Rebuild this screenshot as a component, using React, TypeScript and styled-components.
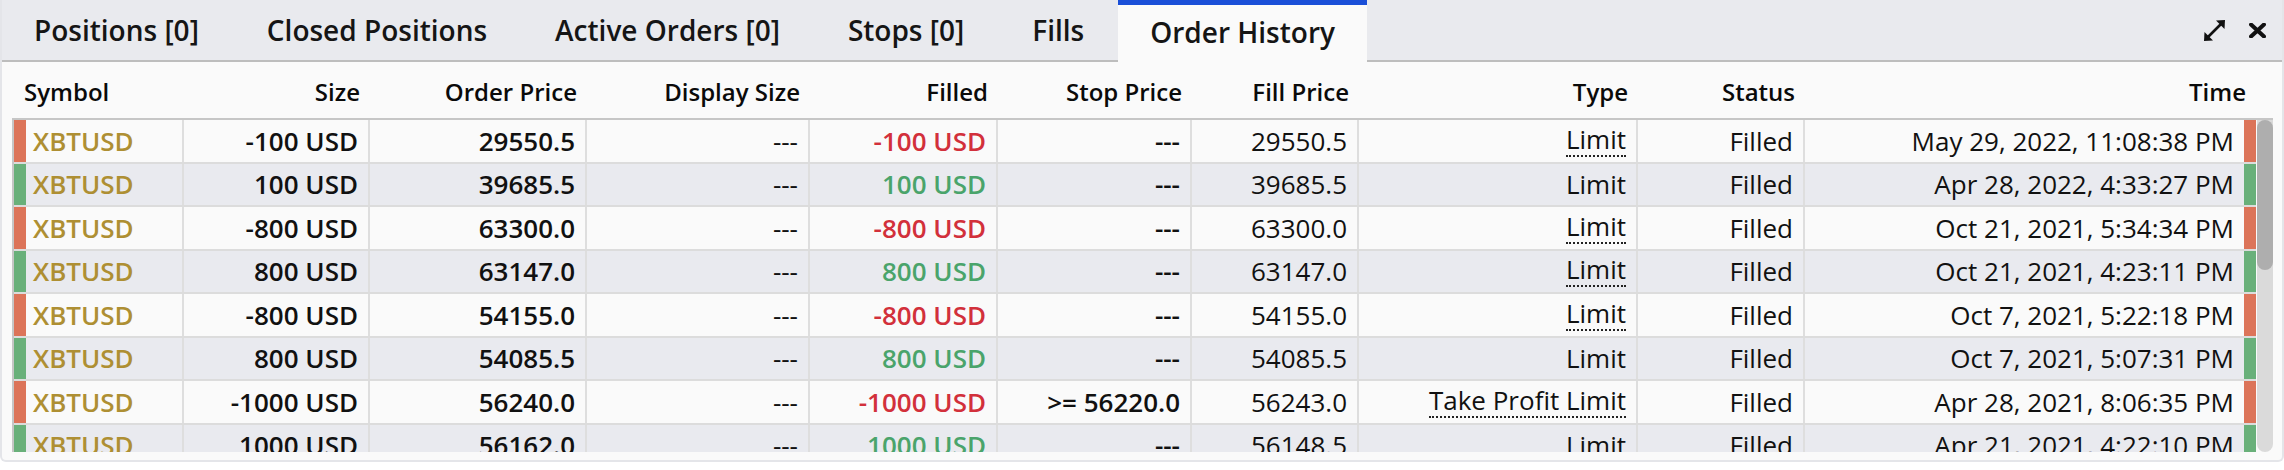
import React from "react";
import styled, { createGlobalStyle, css } from "styled-components";

const GlobalStyle = createGlobalStyle`
  html, body {
    margin: 0;
    padding: 0;
    background: #ffffff;
  }
  body {
    font-family: "Open Sans", "Noto Sans", sans-serif;
    color: #111111;
  }
`;

const HEAD_COLS = "170px 186px 217px 223px 188px 194px 167px 279px 167px 451px";
const ROW_COLS = "12px 158px 186px 217px 223px 188px 194px 167px 279px 167px 439px 12px";

const Panel = styled.div`
    height: 462px;
    box-sizing: border-box;
    display: flex;
    flex-direction: column;
    background: #fafafa;
    border: 2px solid #e4e5e9;
    border-top: none;
    border-radius: 0 0 6px 6px;
    overflow: hidden;
`

const TabBar = styled.div`
    height: 60px;
    display: flex;
    align-items: stretch;
    background: #e9eaee;
    border-bottom: 2px solid #bdbdbd;
    margin: 0 -2px;
`

const Tab = styled.div<{ $active?: boolean }>`
    display: flex;
    align-items: center;
    padding: 0 34px;
    font-size: 28px;
    font-weight: 600;
    color: #151515;
    white-space: nowrap;
    box-sizing: border-box;
    ${p => p.$active && css`
        background: #fafafa;
        border-top: 5px solid #1a4fd8;
        margin-bottom: -2px;
        padding: 0 32px 3px;
    `}
`

const Spacer = styled.div`
    flex: 1;
`

const WindowButtons = styled.div`
    display: flex;
    align-items: center;
    gap: 23px;
    padding-right: 18px;
`

const IconButton = styled.span`
    display: flex;
    color: #111;
`

const Content = styled.div`
    flex: 1;
    display: flex;
    flex-direction: column;
    padding: 0 9px 8px 10px;
    min-height: 0;
`

const HeaderRow = styled.div`
    display: grid;
    grid-template-columns: ${HEAD_COLS};
    height: 56px;
    padding-left: 2px;
    border-bottom: 2px solid #c6c6c6;
    font-size: 24px;
    font-weight: 600;
    color: #0a0a0a;
`

const HeadCell = styled.div<{ $left?: boolean }>`
    display: flex;
    align-items: center;
    justify-content: ${p => (p.$left ? "flex-start" : "flex-end")};
    padding: 2px 10px 0;
    white-space: nowrap;
`

const Body = styled.div`
    flex: 1;
    display: flex;
    border-left: 2px solid #c6c6c6;
    min-height: 0;
`

const Rows = styled.div`
    flex: 1;
    overflow: hidden;
`

const Row = styled.div<{ $even: boolean }>`
    display: grid;
    grid-template-columns: ${ROW_COLS};
    height: 41.5px;
    border-bottom: 2px solid #dcdcdc;
    background: ${p => (p.$even ? "#e9eaef" : "#fafafa")};
    font-size: 26px;
`

const SideBar = styled.div<{ $buy: boolean }>`
    background: ${p => (p.$buy ? "#69b07a" : "#dc7459")};
`

type Tone = "plain" | "buy" | "sell" | "symbol";

const toneColor: Record<Tone, string> = {
    plain: "#111111",
    buy: "#4aa46b",
    sell: "#d2303b",
    symbol: "#ae8f33",
};

const Cell = styled.div<{ $bold?: boolean; $tone?: Tone; $left?: boolean; $last?: boolean }>`
    display: flex;
    align-items: center;
    justify-content: ${p => (p.$left ? "flex-start" : "flex-end")};
    padding: ${p => (p.$left ? "0 10px 0 7px" : "0 10px")};
    border-right: ${p => (p.$last ? "none" : "2px solid #dedede")};
    font-weight: ${p => (p.$bold ? 600 : 400)};
    color: ${p => toneColor[p.$tone || "plain"]};
    white-space: nowrap;
    overflow: hidden;
`

const Dotted = styled.span<{ $on: boolean }>`
    ${p => p.$on && css`
        border-bottom: 2px dotted #222;
        line-height: 1.15;
    `}
`

const ScrollTrack = styled.div`
    width: 16px;
    margin-left: 1px;
    background: #dadada;
    border-radius: 0 0 8px 8px;
    display: flex;
    flex-direction: column;
`

const ScrollThumb = styled.div`
    height: 150px;
    background: #aeaeae;
    border-radius: 8px;
`

type Order = {
    size: number;
    price: string;
    stop?: string;
    fill: string;
    type: string;
    tip: boolean;
    time: string;
};

const orders: Order[] = [
    { size: -100, price: "29550.5", fill: "29550.5", type: "Limit", tip: true, time: "May 29, 2022, 11:08:38 PM" },
    { size: 100, price: "39685.5", fill: "39685.5", type: "Limit", tip: false, time: "Apr 28, 2022, 4:33:27 PM" },
    { size: -800, price: "63300.0", fill: "63300.0", type: "Limit", tip: true, time: "Oct 21, 2021, 5:34:34 PM" },
    { size: 800, price: "63147.0", fill: "63147.0", type: "Limit", tip: true, time: "Oct 21, 2021, 4:23:11 PM" },
    { size: -800, price: "54155.0", fill: "54155.0", type: "Limit", tip: true, time: "Oct 7, 2021, 5:22:18 PM" },
    { size: 800, price: "54085.5", fill: "54085.5", type: "Limit", tip: false, time: "Oct 7, 2021, 5:07:31 PM" },
    { size: -1000, price: "56240.0", stop: ">= 56220.0", fill: "56243.0", type: "Take Profit Limit", tip: true, time: "Apr 28, 2021, 8:06:35 PM" },
    { size: 1000, price: "56162.0", fill: "56148.5", type: "Limit", tip: false, time: "Apr 21, 2021, 4:22:10 PM" },
];

const tabs = ["Positions [0]", "Closed Positions", "Active Orders [0]", "Stops [0]", "Fills", "Order History"];

const headers = ["Symbol", "Size", "Order Price", "Display Size", "Filled", "Stop Price", "Fill Price", "Type", "Status", "Time"];

function ExpandIcon() {
    return (
        <svg width="23" height="23" viewBox="0 0 23 23">
            <line x1="5" y1="18" x2="18" y2="5" stroke="#111" strokeWidth="2.6" />
            <polygon points="22,1 21.5,10 13,1.5" fill="#111" />
            <polygon points="1,22 1.5,13 10,21.5" fill="#111" />
        </svg>
    );
}

function CloseIcon() {
    return (
        <svg width="17" height="15" viewBox="0 0 17 15">
            <path d="M2 1.5 L15 13.5 M15 1.5 L2 13.5" stroke="#111" strokeWidth="4" strokeLinecap="round" />
        </svg>
    );
}

export default function App() {
    function renderTabs() {
        return (
            <TabBar>
                {tabs.map(t => (
                    <Tab key={t} $active={t === "Order History"}>{t}</Tab>
                ))}
                <Spacer />
                <WindowButtons>
                    <IconButton><ExpandIcon /></IconButton>
                    <IconButton><CloseIcon /></IconButton>
                </WindowButtons>
            </TabBar>
        );
    }

    function renderRow(o: Order, i: number) {
        const buy = o.size > 0;
        return (
            <Row key={i} $even={i % 2 === 1}>
                <SideBar $buy={buy} />
                <Cell $left $bold $tone="symbol">XBTUSD</Cell>
                <Cell $bold>{o.size} USD</Cell>
                <Cell $bold>{o.price}</Cell>
                <Cell>---</Cell>
                <Cell $bold $tone={buy ? "buy" : "sell"}>{o.size} USD</Cell>
                <Cell $bold>{o.stop || "---"}</Cell>
                <Cell>{o.fill}</Cell>
                <Cell><Dotted $on={o.tip}>{o.type}</Dotted></Cell>
                <Cell>Filled</Cell>
                <Cell $last>{o.time}</Cell>
                <SideBar $buy={buy} />
            </Row>
        );
    }

    return (
        <>
            <GlobalStyle />
            <Panel>
                {renderTabs()}
                <Content>
                    <HeaderRow>
                        {headers.map((h, i) => (
                            <HeadCell key={h} $left={i === 0}>{h}</HeadCell>
                        ))}
                    </HeaderRow>
                    <Body>
                        <Rows>
                            {orders.map(renderRow)}
                        </Rows>
                        <ScrollTrack>
                            <ScrollThumb />
                        </ScrollTrack>
                    </Body>
                </Content>
            </Panel>
        </>
    );
}
